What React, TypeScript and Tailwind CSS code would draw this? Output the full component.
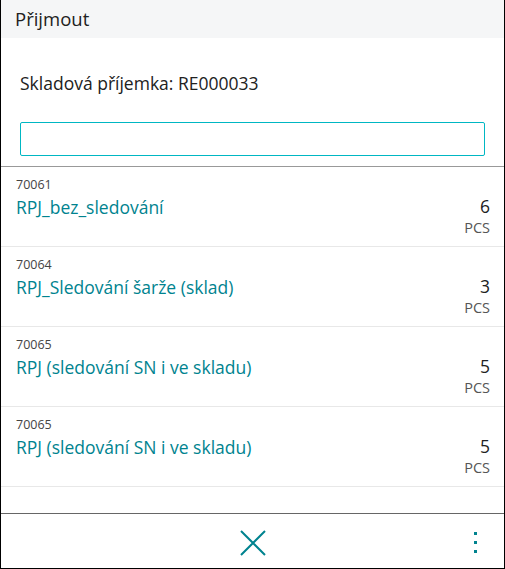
const ITEMS = [
  { no: '70061', name: 'RPJ_bez_sledování', qty: 6 },
  { no: '70064', name: 'RPJ_Sledování šarže (sklad)', qty: 3 },
  { no: '70065', name: 'RPJ (sledování SN i ve skladu)', qty: 5 },
  { no: '70065', name: 'RPJ (sledování SN i ve skladu)', qty: 5 },
];

export default function App() {
  return (
    <div
      className="h-[569px] w-[505px] flex flex-col bg-white border-x border-b border-black text-[#212121]"
      style={{ fontFamily: '"Segoe UI", "Open Sans", "Noto Sans", sans-serif' }}
    >
      {/* Header */}
      <div className="h-[38px] shrink-0 bg-[#f5f6f7] pl-[14px] flex items-center text-[18.5px] leading-none">
        Přijmout
      </div>

      {/* Document info + search */}
      <div className="px-[19px] pt-[33px] pb-[10px] border-b border-[#999]">
        <p className="text-[17.5px] leading-[24px]">Skladová příjemka: RE000033</p>
        <input className="mt-[27px] h-[34px] w-full rounded-[2px] border border-[#00b7c3] outline-none px-2" />
      </div>

      {/* Lines */}
      <div className="flex-1 overflow-hidden">
        {ITEMS.map((it, i) => (
          <div key={i} className="h-[80px] border-b border-[#e8e8e8] pl-[15px] pr-[14px] pt-[9px] flex justify-between">
            <div>
              <p className="text-[12.5px] leading-[18px] text-[#444]">{it.no}</p>
              <p className="text-[17.5px] leading-[26px] text-[#00838f]">{it.name}</p>
            </div>
            <div className="text-right pt-[18px]">
              <p className="text-[17.5px] leading-[24px]">{it.qty}</p>
              <p className="text-[14.5px] leading-[20px] text-[#555]">PCS</p>
            </div>
          </div>
        ))}
      </div>

      {/* Footer */}
      <div className="h-[55px] shrink-0 border-t border-[#666] relative flex items-center justify-center">
        <svg width="26" height="26" viewBox="0 0 26 26" className="text-[#00838f] mt-[3px]">
          <path d="M1 1L25 25M25 1L1 25" stroke="currentColor" strokeWidth="2" fill="none" />
        </svg>
        <div className="absolute right-[27px] top-[18px] flex flex-col gap-[6px]">
          <span className="block w-[3px] h-[3px] bg-[#00838f]" />
          <span className="block w-[3px] h-[3px] bg-[#00838f]" />
          <span className="block w-[3px] h-[3px] bg-[#00838f]" />
        </div>
      </div>
    </div>
  );
}
